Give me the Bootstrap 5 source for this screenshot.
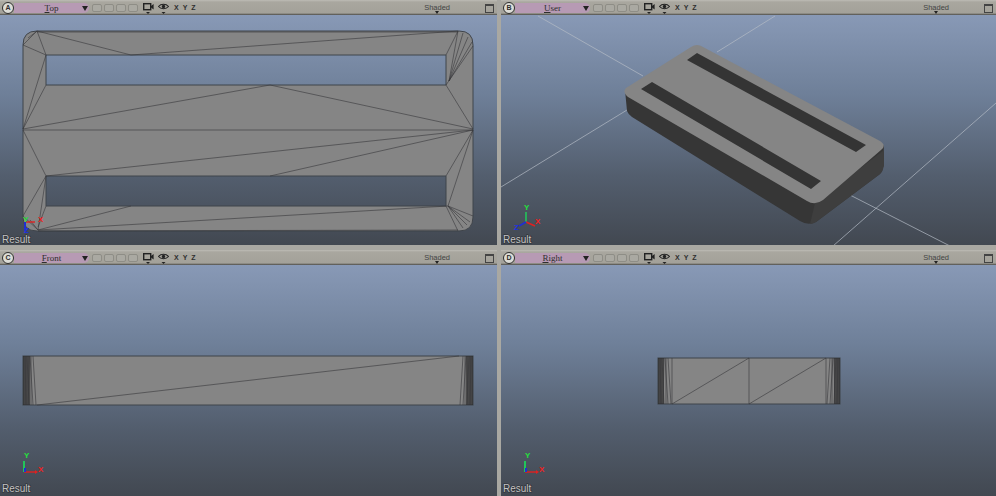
<!DOCTYPE html>
<html lang="en">
<head>
  <meta charset="UTF-8" />
  <title>Modeling Views</title>
  <meta name="viewport" content="width=device-width, initial-scale=1" />
  <link href="https://cdn.jsdelivr.net/npm/bootstrap@5.3.3/dist/css/bootstrap.min.css" rel="stylesheet" />
  <style>
    html, body {
      height: 100%;
      overflow: hidden;
    }
    body {
      background: #a9a8a2;
      font-family: "Liberation Sans", Arial, sans-serif;
    }
    .views {
      display: grid;
      grid-template-columns: 497px 495px;
      grid-template-rows: 245px 246px;
      column-gap: 4px;
      row-gap: 5px;
      width: 996px;
      height: 496px;
    }
    .pane {
      min-width: 0;
      overflow: hidden;
      background: #a9a8a2;
    }
    .bar {
      height: 15px;
      padding: 2px 2px 1px 1px;
      background: linear-gradient(#bdbcb5 0, #a9a79f 2px, #a3a199 13px, #4c4b47 15px);
      color: #2e2e2e;
      font-size: 7.5px;
      line-height: 12px;
    }
    .letter {
      width: 12px;
      height: 12px;
      margin-left: 1px;
      border: 1.5px solid #2e2e2e;
      border-radius: 50%;
      background: #dcdcd6;
      font-size: 7px;
      font-weight: 700;
      line-height: 9px;
      text-align: center;
      flex: none;
    }
    .view-pick {
      width: 75px;
      height: 10px;
      background: #b79ab4;
      border-radius: 0 5px 5px 0;
      font-family: "Liberation Serif", serif;
      font-size: 9px;
      line-height: 10px;
      flex: none;
    }
    .view-pick u {
      flex: 1;
      text-align: center;
      text-decoration: none;
      padding-left: 7px;
    }
    .view-pick u::first-letter {
      text-decoration: underline;
    }
    .arrow {
      width: 0;
      height: 0;
      border-left: 3px solid transparent;
      border-right: 3px solid transparent;
      border-top: 5px solid #222;
      margin-right: 1px;
    }
    .slots {
      gap: 2px;
      margin-left: 3px;
    }
    .slots span {
      width: 10px;
      height: 8px;
      background: #aaa9a2;
      border: 1px solid #8e8d86;
      border-radius: 2px;
    }
    .cam {
      margin-left: 5px;
    }
    .eye {
      margin-left: 4px;
    }
    .axes {
      gap: 4px;
      margin-left: 5px;
      font-size: 7px;
      font-weight: 700;
      width: 26px;
    }
    .shade {
      margin-left: auto;
      margin-right: 35px;
      color: #444;
      font-size: 7.5px;
      position: relative;
    }
    .shade::after {
      content: "";
      position: absolute;
      left: 50%;
      bottom: 0;
      margin-left: -2px;
      border-left: 2px solid transparent;
      border-right: 2px solid transparent;
      border-top: 3px solid #222;
    }
    .maxi {
      width: 9px;
      height: 9px;
      border: 1px solid #444;
      border-top-width: 2px;
      margin-right: 1px;
      flex: none;
    }
    .scene {
      display: block;
      background: linear-gradient(#8899b6 0, #6e7f98 35%, #535e6e 70%, #424851 100%);
    }
    .scene .solid {
      fill: #858585;
      fill-rule: evenodd;
      stroke: #3f444a;
      stroke-width: 1;
    }
    .scene .edge {
      fill: none;
      stroke: #38383a;
      stroke-width: .6;
    }
    .scene .ground {
      stroke: #b4bbc6;
      stroke-width: .7;
      fill: none;
    }
    .scene .shadow-end {
      fill: #1c1c1c;
      opacity: .55;
    }
    .scene text {
      font-family: "Liberation Sans", Arial, sans-serif;
      font-weight: 700;
      font-size: 8px;
    }
    .scene .result {
      fill: #c4c4c4;
      font-size: 10px;
      font-weight: 400;
      paint-order: stroke;
      stroke: #2d3036;
      stroke-width: 1.2px;
    }
  </style>
</head>
<body>

  <svg width="0" height="0" class="position-absolute">
    <defs>
      <symbol id="cam-icon" viewBox="0 0 11 12">
        <rect x=".7" y="1.7" width="7" height="6" fill="none" stroke="#222" stroke-width="1.4" />
        <path d="M8 4l2.6-2v5.4L8 5.5z" fill="#222" />
        <path d="M3 10h4l-2 2z" fill="#222" />
      </symbol>
      <symbol id="eye-icon" viewBox="0 0 11 12">
        <path d="M.5 4.5C3 1.5 8 1.5 10.5 4.5 8 7.5 3 7.5.5 4.5z" fill="none" stroke="#222" stroke-width="1.1" />
        <circle cx="5.5" cy="4.5" r="1.7" fill="#222" />
        <path d="M3.5 10h4l-2 2z" fill="#222" />
      </symbol>
    </defs>
  </svg>

  <div class="views">

    <!-- Top view -->
    <div class="pane">
      <div class="bar d-flex align-items-center">
        <span class="letter">A</span>
        <div class="view-pick d-flex align-items-center"><u>Top</u><span class="arrow"></span></div>
        <div class="slots d-flex"><span></span><span></span><span></span><span></span></div>
        <svg class="cam" width="11" height="12"><use href="#cam-icon" /></svg>
        <svg class="eye" width="11" height="12"><use href="#eye-icon" /></svg>
        <div class="axes d-flex"><span>X</span><span>Y</span><span>Z</span></div>
        <span class="shade">Shaded</span>
        <span class="maxi"></span>
      </div>
      <svg class="scene" width="497" height="230" viewBox="0 15 497 230">
        <path class="solid" d="M37 31H459Q473 31 473 45V217Q473 231 459 231H37Q23 231 23 217V45Q23 31 37 31ZM46 55V85H446V55ZM46 176V206H446V176Z" />
        <path class="edge" d="M23 130H473M37 31L46 55M23 45L46 55M37 31L131 55L458 31M37 32H458M23 45L37 31M28 38L37 31M458 31L446 55M449 81L458 31M449 81L463 33M449 81L468 37M449 81L472 42M446 85L473 46M446 85L473 129M23 129L46 85M23 129L46 55M23 129L270 85L473 129M23 130L46 176L473 130M270 176L473 130M473 130L446 176M473 130L448 206M46 176L23 216M46 176L38 230M46 206L38 227M131 206L38 230L448 206M38 231L458 230M23 216L38 230M30 220L38 230M448 206L473 216M448 206L470 222M448 206L467 225M448 206L463 228M446 206L458 231" />
        <path d="M25 222H35" stroke="#e02020" stroke-width="1.4" />
        <path d="M25 222V231" stroke="#2030d0" stroke-width="2" />
        <text x="23" y="222" fill="#25e03d">Y</text>
        <text x="38" y="222" fill="#ee2020">X</text>
        <text x="24" y="233" fill="#2030e0">Z</text>
        <text class="result" x="2" y="243">Result</text>
      </svg>
    </div>

    <!-- User view -->
    <div class="pane">
      <div class="bar d-flex align-items-center">
        <span class="letter">B</span>
        <div class="view-pick d-flex align-items-center"><u>User</u><span class="arrow"></span></div>
        <div class="slots d-flex"><span></span><span></span><span></span><span></span></div>
        <svg class="cam" width="11" height="12"><use href="#cam-icon" /></svg>
        <svg class="eye" width="11" height="12"><use href="#eye-icon" /></svg>
        <div class="axes d-flex"><span>X</span><span>Y</span><span>Z</span></div>
        <span class="shade">Shaded</span>
        <span class="maxi"></span>
      </div>
      <svg class="scene" width="495" height="230" viewBox="501 15 495 230">
        <path class="ground" d="M538 16L643 76M775 16L717 52M501 187L627 110M850 195L950 246M996 103L833 246" />
        <path d="M625 90L627 111Q628 114 632 117L800 221Q808 226 816 222L880 174Q883 171 883 166L884 145L815 200Z" fill="#363636" />
        <path d="M815 203L884 150V166Q883 171 880 174L816 222Q813 224 810 224Z" fill="#3e3e3e" />
        <path d="M626 88L691 47Q697 43 703 47L880 141Q887 146 881 150L823 200Q815 206 807 201L628 97Q622 92 626 88Z" fill="#858585" />
        <path d="M697 53L687 60L856 152L866 145ZM652 82L641 89L811 189L821 181Z" fill="#343434" />
        <path d="M526 222V212" stroke="#22c55a" stroke-width="1.6" />
        <path d="M526 222L535 226" stroke="#e02020" stroke-width="1.4" />
        <path d="M526 222L519 226" stroke="#2030d0" stroke-width="2" />
        <text x="524" y="210" fill="#25e03d">Y</text>
        <text x="535" y="224" fill="#ee2020">X</text>
        <text x="514" y="230" fill="#2030e0">Z</text>
        <text class="result" x="503" y="243">Result</text>
      </svg>
    </div>

    <!-- Front view -->
    <div class="pane">
      <div class="bar d-flex align-items-center">
        <span class="letter">C</span>
        <div class="view-pick d-flex align-items-center"><u>Front</u><span class="arrow"></span></div>
        <div class="slots d-flex"><span></span><span></span><span></span><span></span></div>
        <svg class="cam" width="11" height="12"><use href="#cam-icon" /></svg>
        <svg class="eye" width="11" height="12"><use href="#eye-icon" /></svg>
        <div class="axes d-flex"><span>X</span><span>Y</span><span>Z</span></div>
        <span class="shade">Shaded</span>
        <span class="maxi"></span>
      </div>
      <svg class="scene" width="497" height="231" viewBox="0 265 497 231">
        <rect class="solid" x="23" y="356" width="450" height="49" />
        <rect class="shadow-end" x="23" y="356" width="7" height="49" />
        <rect class="shadow-end" x="466" y="356" width="7" height="49" />
        <path class="edge" d="M37 405L459 356M24 356V405M25 356L26 405M26 356V405M27 356L29 405M29 356L28 405M31 356L31 405M30 356L33 405M33 356L36 405M472 356V405M471 356L470 405M470 356V405M469 356L467 405M467 356L468 405M465 356V405M466 356L463 405M463 356L460 405" />
        <path d="M24 472V461" stroke="#22c55a" stroke-width="2" />
        <path d="M24 472H35" stroke="#e02020" stroke-width="1.4" />
        <path d="M35 470l3 2-3 2z" fill="#e02020" />
        <path d="M25 472V468" stroke="#2030d0" stroke-width="2" />
        <text x="24" y="458" fill="#25e03d">Y</text>
        <text x="38" y="472" fill="#ee2020">X</text>
        <text class="result" x="2" y="492">Result</text>
      </svg>
    </div>

    <!-- Right view -->
    <div class="pane">
      <div class="bar d-flex align-items-center">
        <span class="letter">D</span>
        <div class="view-pick d-flex align-items-center"><u>Right</u><span class="arrow"></span></div>
        <div class="slots d-flex"><span></span><span></span><span></span><span></span></div>
        <svg class="cam" width="11" height="12"><use href="#cam-icon" /></svg>
        <svg class="eye" width="11" height="12"><use href="#eye-icon" /></svg>
        <div class="axes d-flex"><span>X</span><span>Y</span><span>Z</span></div>
        <span class="shade">Shaded</span>
        <span class="maxi"></span>
      </div>
      <svg class="scene" width="495" height="231" viewBox="501 265 495 231">
        <rect class="solid" x="658" y="358" width="182" height="46" />
        <rect class="shadow-end" x="658" y="358" width="6" height="46" />
        <rect class="shadow-end" x="834" y="358" width="6" height="46" />
        <path class="edge" d="M749 358V404M672 404L749 358M749 404L826 358M672 358V404M826 358V404M659 358V404M660 358L661 404M661 358V404M662 358L664 404M664 358L663 404M666 358L666 404M665 358L668 404M668 358L671 404M839 358V404M838 358L837 404M837 358V404M836 358L834 404M834 358L835 404M832 358V404M833 358L830 404M830 358L827 404" />
        <path d="M525 472V461" stroke="#22c55a" stroke-width="2" />
        <path d="M525 472H536" stroke="#e02020" stroke-width="1.4" />
        <path d="M536 470l3 2-3 2z" fill="#e02020" />
        <path d="M526 472V468" stroke="#2030d0" stroke-width="2" />
        <text x="525" y="458" fill="#25e03d">Y</text>
        <text x="539" y="472" fill="#ee2020">X</text>
        <text class="result" x="503" y="492">Result</text>
      </svg>
    </div>

  </div>

  <script src="https://cdn.jsdelivr.net/npm/bootstrap@5.3.3/dist/js/bootstrap.bundle.min.js"></script>
</body>
</html>
